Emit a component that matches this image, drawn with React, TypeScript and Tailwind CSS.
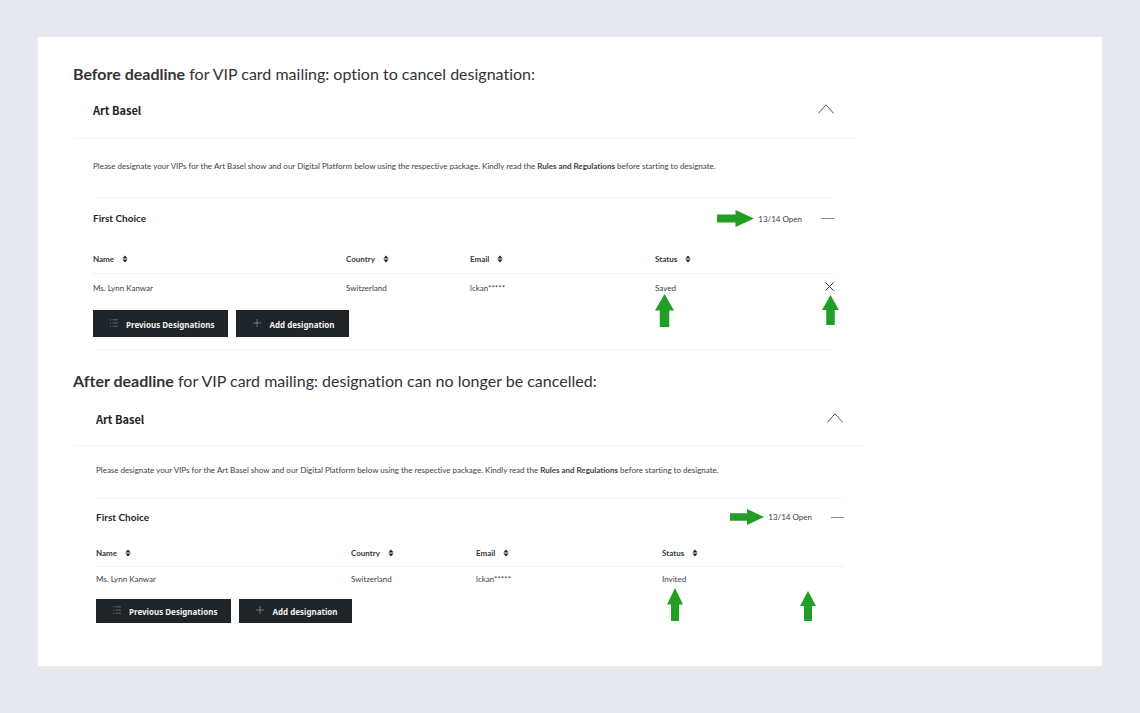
type Designation = {
  name: string;
  country: string;
  email: string;
  status: string;
};

const saved: Designation = {
  name: "Ms. Lynn Kanwar",
  country: "Switzerland",
  email: "lckan*****",
  status: "Saved",
};

const invited: Designation = { ...saved, status: "Invited" };

function UpArrow({ className }: { className: string }) {
  return (
    <svg viewBox="0 0 18 32" preserveAspectRatio="none" className={className} aria-hidden="true">
      <path d="M9 0 18 16H13.5V32H4.5V16H0Z" fill="#229d26" />
    </svg>
  );
}

function RightArrow({ className }: { className: string }) {
  return (
    <svg viewBox="0 0 36 17" preserveAspectRatio="none" className={className} aria-hidden="true">
      <path d="M0 4.5H18V0L36 8.5 18 17V12.5H0Z" fill="#229d26" />
    </svg>
  );
}

function SortIcon() {
  return (
    <svg viewBox="0 0 6 8" className="h-2 w-1.5" aria-hidden="true">
      <path d="M3 0.5 5.6 3.5H0.4ZM3 7.5 0.4 4.5H5.6Z" fill="#22272b" />
    </svg>
  );
}

function ListIcon() {
  return (
    <svg viewBox="0 0 8 8" className="mb-1 h-2 w-2" stroke="#8b9093" strokeWidth="0.6" aria-hidden="true">
      <path d="M0 0.8H1.2M2.5 0.8H8M0 4H1.2M2.5 4H8M0 7.2H1.2M2.5 7.2H8" />
    </svg>
  );
}

function PlusIcon() {
  return (
    <svg viewBox="0 0 8 8" className="mb-1 h-2 w-2" stroke="#a5a9ab" strokeWidth="0.6" aria-hidden="true">
      <path d="M4 0V8M0 4H8" />
    </svg>
  );
}

function Panel({ row, closed = false }: { row: Designation; closed?: boolean }) {
  const columns = [
    { label: "Name", width: closed ? "w-[255px]" : "w-[253px]" },
    { label: "Country", width: closed ? "w-[125px]" : "w-[124px]" },
    { label: "Email", width: closed ? "w-[186px]" : "w-[185px]" },
    { label: "Status", width: "w-auto" },
  ];
  const button = `flex items-center gap-2 bg-[#1e2428] pr-3.5 pl-[17px] pt-0.5 font-['Noto_Sans',sans-serif] text-[8px] font-bold text-[#f2f2f2] ${closed ? "h-6" : "h-[27px]"}`;

  return (
    <section className={`text-[#3c4145] ${closed ? "max-w-[792px]" : "max-w-[783px]"}`}>
      <header
        className={`flex h-[52px] items-center justify-between border-b border-[#f6f6f6] ${closed ? "pr-[22px] pl-[23px]" : "pr-[22px] pb-1 pl-5"}`}
      >
        <h2 className="font-['Noto_Sans_CJK_SC',sans-serif] text-[11px] font-bold text-[#1e2428]">
          Art Basel
        </h2>
        <button type="button" aria-label="Collapse Art Basel" className="mb-1">
          <svg viewBox="0 0 16 10" className="h-2.5 w-4" fill="none" stroke="#555" strokeWidth="1">
            <path d="M0.4 9.4 8 0.8 15.6 9.4" />
          </svg>
        </button>
      </header>

      <div className={closed ? "mr-[21px] ml-[23px]" : "mr-[22px] ml-5 border-b border-[#f6f6f6] pb-3"}>
        <p
          className={`flex items-center border-b border-[#f6f6f6] pb-1 text-[8px] ${closed ? "h-[53px]" : "h-[59px]"}`}
        >
          <span>
            Please designate your VIPs for the Art Basel show and our Digital Platform below using the
            respective package. Kindly read the <b>Rules and Regulations</b> before starting to designate.
          </span>
        </p>

        <div className={`flex items-center ${closed ? "h-9" : "h-[41px]"}`}>
          <h3 className="flex-1 text-[10px] font-bold text-[#22272b]">First Choice</h3>
          <RightArrow className={closed ? "h-4 w-[34px]" : "h-[17px] w-[37px]"} />
          <span className="ml-1 text-[8px]">13/14 Open</span>
          <button type="button" aria-label="Collapse First Choice" className="ml-[19px] h-3 w-[13px]">
            <span className="block h-px bg-[#888]" />
          </button>
        </div>

        <table className="w-full table-fixed text-left text-[8px]">
          <thead>
            <tr className={`border-b border-[#f0f0f0] ${closed ? "h-[31px]" : "h-[34px]"}`}>
              {columns.map(({ label, width }) => (
                <th key={label} className={`p-0 pt-1.5 ${width}`}>
                  <button type="button" className="flex items-center gap-2 font-bold text-[#33383c]">
                    {label}
                    <SortIcon />
                  </button>
                </th>
              ))}
            </tr>
          </thead>
          <tbody>
            <tr className={closed ? "h-[26px]" : "h-[30px]"}>
              <td className="p-0">{row.name}</td>
              <td className="p-0">{row.country}</td>
              <td className="p-0">{row.email}</td>
              <td className="relative p-0">
                {row.status}
                <UpArrow
                  className={closed ? "absolute top-[21px] left-[5px] h-[33px] w-4" : "absolute top-5 left-0 h-[33px] w-[19px]"}
                />
                {!closed && (
                  <button type="button" aria-label="Cancel designation" className="absolute top-2 right-0">
                    <svg viewBox="0 0 9 9" className="h-[9px] w-[9px]" stroke="#333" strokeWidth="1">
                      <path d="M0.4 0.4 8.6 8.6M8.6 0.4 0.4 8.6" />
                    </svg>
                  </button>
                )}
                <UpArrow
                  className={closed ? "absolute top-6 right-7 h-[30px] w-4" : "absolute top-[21px] -right-[5px] h-[30px] w-[17px]"}
                />
              </td>
            </tr>
          </tbody>
        </table>

        <div className="mt-[7px] flex gap-2">
          <button type="button" className={button}>
            <ListIcon />
            Previous Designations
          </button>
          <button type="button" className={button}>
            <PlusIcon />
            Add designation
          </button>
        </div>
      </div>
    </section>
  );
}

export default function App() {
  return (
    <div className="min-h-screen bg-[#e8e9ee] px-[38px] pt-[37px] pb-[46px] font-[Lato,sans-serif] [font-variant-ligatures:none]">
      <main className="bg-white pt-6 pr-6 pb-[43px] pl-[35px]">
        <h1 className="text-[16px] leading-[26px] text-[#333]">
          <b>Before deadline</b> for VIP card mailing: option to cancel designation:
        </h1>
        <Panel row={saved} />
        <h1 className="mt-[18px] text-[16px] leading-[26px] text-[#333]">
          <b>After deadline</b> for VIP card mailing: designation can no longer be cancelled:
        </h1>
        <Panel row={invited} closed />
      </main>
    </div>
  );
}
